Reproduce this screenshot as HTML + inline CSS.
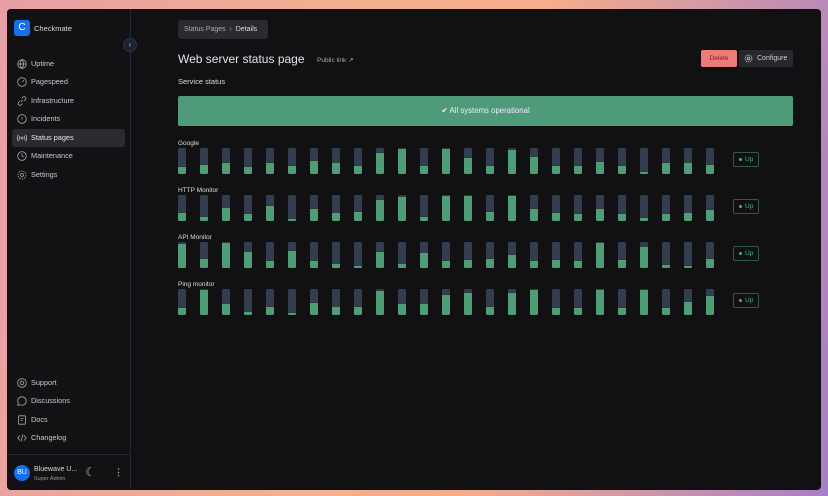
<!DOCTYPE html>
<html><head><meta charset="utf-8"><style>
*{box-sizing:border-box;margin:0;padding:0}
body{width:828px;height:496px;overflow:hidden;font-family:"Liberation Sans",sans-serif;background:linear-gradient(100deg,#e6a0a6 0%,#f3b08e 40%,#f5ad8c 60%,#a77fc6 100%);position:relative}
.win{position:absolute;left:7px;top:9px;width:814px;height:481px;background:#111113;border-radius:4px;overflow:hidden}
.side{position:absolute;left:0;top:0;width:124px;height:100%;border-right:1px solid #232733;background:#121214}
.logo{position:absolute;left:7px;top:11px;width:16px;height:16px;background:#1570ef;border-radius:3px;color:#fff;font-size:10px;text-align:center;line-height:16px}
.brand{position:absolute;left:27px;top:15px;font-size:7.5px;color:#d8d8dc}
.nav{position:absolute;left:5px;width:113px;height:18px;border-radius:3px;font-size:7.3px;color:#c9cad0;line-height:18px;padding-left:19px}
.nav.act{background:#2a2b2f;color:#e8e8ec}
.nav svg{position:absolute;left:5px;top:4px}
.coll{position:absolute;left:116px;top:29px;width:14px;height:14px;border-radius:50%;background:#1a2233;border:1px solid #2a3346;color:#aab;font-size:8px;text-align:center;line-height:12px;z-index:3}
.hr{position:absolute;left:0;top:445px;width:124px;border-top:1px solid #232733}
.av{position:absolute;left:7px;top:456px;width:16px;height:16px;border-radius:50%;background:#1570ef;color:#fff;font-size:7px;text-align:center;line-height:16px}
.t{position:absolute;white-space:nowrap}
.bar{position:absolute;width:8px;height:26px;background:#333d50;border-radius:1.5px;overflow:hidden}
.bar i{position:absolute;left:0;bottom:0;width:8px;background:#4f9d77;border-top:1px solid #2b3a3a}
.up{position:absolute;left:726px;width:26px;height:15px;border:1px solid #2f5a44;border-radius:2px;color:#4fb07e;font-size:6.5px;line-height:13px;padding-left:11px}
.up:before{content:"";position:absolute;left:5px;top:5px;width:3px;height:3px;border-radius:50%;background:#4fb07e}
</style></head><body><div class="win">
<div class="side">
<div class="logo">C</div><div class="brand">Checkmate</div>
<div class="nav" style="top:46px"><svg width="10" height="10" viewBox="0 0 10 10" fill="none" stroke="#aaa" stroke-width=".8"><circle cx="5" cy="5" r="4.3"/><path d="M.7 5h8.6M5 .7c-2.2 2.6-2.2 6 0 8.6M5 .7c2.2 2.6 2.2 6 0 8.6"/></svg>Uptime</div>
<div class="nav" style="top:64px"><svg width="10" height="10" viewBox="0 0 10 10" fill="none" stroke="#aaa" stroke-width=".8"><circle cx="5" cy="5" r="4.3"/><path d="M5 5l2-2"/></svg>Pagespeed</div>
<div class="nav" style="top:83px"><svg width="10" height="10" viewBox="0 0 10 10" fill="none" stroke="#aaa" stroke-width=".8"><path d="M4 6l2-2M3 5L1.5 6.5a1.8 1.8 0 002.5 2.5L5.5 7.5M7 5l1.5-1.5A1.8 1.8 0 006 1L4.5 2.5"/></svg>Infrastructure</div>
<div class="nav" style="top:101px"><svg width="10" height="10" viewBox="0 0 10 10" fill="none" stroke="#aaa" stroke-width=".8"><circle cx="5" cy="5" r="4.3"/><path d="M5 3v2.5"/></svg>Incidents</div>
<div class="nav act" style="top:120px"><svg width="10" height="10" viewBox="0 0 10 10" fill="none" stroke="#bbb" stroke-width=".8"><circle cx="5" cy="5" r="1"/><path d="M3 3a3 3 0 000 4M7 3a3 3 0 010 4M1.5 1.8a5 5 0 000 6.4M8.5 1.8a5 5 0 010 6.4"/></svg>Status pages</div>
<div class="nav" style="top:138px"><svg width="10" height="10" viewBox="0 0 10 10" fill="none" stroke="#aaa" stroke-width=".8"><circle cx="5" cy="5" r="4.3"/><path d="M5 2.5V5l1.7 1"/></svg>Maintenance</div>
<div class="nav" style="top:157px"><svg width="10" height="10" viewBox="0 0 10 10" fill="none" stroke="#aaa" stroke-width=".8"><circle cx="5" cy="5" r="1.5"/><circle cx="5" cy="5" r="4" stroke-dasharray="1.5 1"/></svg>Settings</div>
<div class="nav" style="top:365px"><svg width="10" height="10" viewBox="0 0 10 10" fill="none" stroke="#aaa" stroke-width=".8"><circle cx="5" cy="5" r="4.3"/><circle cx="5" cy="5" r="1.8"/></svg>Support</div>
<div class="nav" style="top:383px"><svg width="10" height="10" viewBox="0 0 10 10" fill="none" stroke="#aaa" stroke-width=".8"><path d="M5 .8a4.2 4.2 0 00-3.7 6.2L.8 9.2 3 8.7A4.2 4.2 0 105 .8z"/></svg>Discussions</div>
<div class="nav" style="top:402px"><svg width="10" height="10" viewBox="0 0 10 10" fill="none" stroke="#aaa" stroke-width=".8"><rect x="1.5" y=".8" width="7" height="8.4" rx="1"/><path d="M3.5 3.5h3M3.5 5.5h2"/></svg>Docs</div>
<div class="nav" style="top:420px"><svg width="10" height="10" viewBox="0 0 10 10" fill="none" stroke="#aaa" stroke-width=".8"><path d="M3 2.5L.8 5 3 7.5M7 2.5L9.2 5 7 7.5M6 1.5L4 8.5"/></svg>Changelog</div>
<div class="hr"></div>
<div class="av">BU</div>
<div class="t" style="left:27px;top:457px;font-size:7px;color:#ddd">Bluewave U...</div>
<div class="t" style="left:27px;top:467px;font-size:5.5px;color:#999">Super Admin</div>
<div class="t" style="left:78px;top:456px;font-size:12px;color:#bbb">☾</div>
<div class="t" style="left:107px;top:458px;font-size:9px;color:#aaa;font-weight:bold">⋮</div>
</div>
<div class="coll">‹</div>
<div class="t" style="left:171px;top:11px;width:90px;height:19px;background:#2a2b2e;border-radius:3px;font-size:7px;color:#aaa;line-height:19px;padding-left:6px">Status Pages &nbsp;›&nbsp; <span style="color:#ddd">Details</span></div>
<div class="t" style="left:171px;top:43px;font-size:12px;color:#e5e6ea">Web server status page</div>
<div class="t" style="left:310px;top:47px;font-size:6.5px;color:#aaa">Public link ↗</div>
<div class="t" style="left:694px;top:41px;width:36px;height:17px;background:#ee7a7a;border-radius:2px;font-size:6.5px;color:#7a2020;text-align:center;line-height:17px">Delete</div>
<div class="t" style="left:732px;top:41px;width:54px;height:17px;background:#27282c;border-radius:2px;font-size:7px;color:#ccc;line-height:17px;padding-left:18px">Configure</div>
<svg class="t" style="left:737px;top:45px" width="9" height="9" viewBox="0 0 10 10" fill="none" stroke="#ccc" stroke-width=".9"><circle cx="5" cy="5" r="1.5"/><circle cx="5" cy="5" r="3.8" stroke-dasharray="1.6 0.9"/></svg>
<div class="t" style="left:171px;top:68px;font-size:7.5px;color:#ddd">Service status</div>
<div class="t" style="left:171px;top:87px;width:615px;height:30px;background:#4f9a78;border-radius:2px;font-size:7.8px;color:#eef;text-align:center;line-height:30px">✔ All systems operational</div>
<div id="rows"></div>
</div>
<script>
var rows=[["Google",[.3,.4,.45,.3,.45,.35,.55,.45,.35,.85,1,.35,1,.65,.35,.95,.7,.35,.35,.5,.35,.1,.45,.48,.38]],
["HTTP Monitor",[.35,.2,.55,.3,.6,.1,.5,.35,.4,.85,.95,.2,1,1,.4,1,.5,.35,.3,.5,.3,.15,.3,.35,.45]],
["API Monitor",[.95,.4,1,.65,.3,.7,.3,.2,.12,.65,.18,.6,.3,.35,.4,.55,.3,.35,.3,1,.35,.85,.15,.12,.4]],
["Ping monitor",[.3,1,.45,.15,.35,.1,.5,.35,.35,.95,.45,.45,.8,.9,.35,.9,1,.3,.3,1,.3,1,.3,.55,.75]]];
var h="";rows.forEach(function(r,k){var y=131+k*47;h+='<div class="t" style="left:171px;top:'+y+'px;font-size:6.5px;color:#ddd">'+r[0]+'</div>';
r[1].forEach(function(f,j){h+='<div class="bar" style="left:'+(171+j*22)+'px;top:'+(y+8)+'px"><i style="height:'+Math.round(f*26)+'px"></i></div>'});
h+='<div class="up" style="top:'+(y+12)+'px">Up</div>'});
document.getElementById("rows").innerHTML=h;
</script>
</body></html>
